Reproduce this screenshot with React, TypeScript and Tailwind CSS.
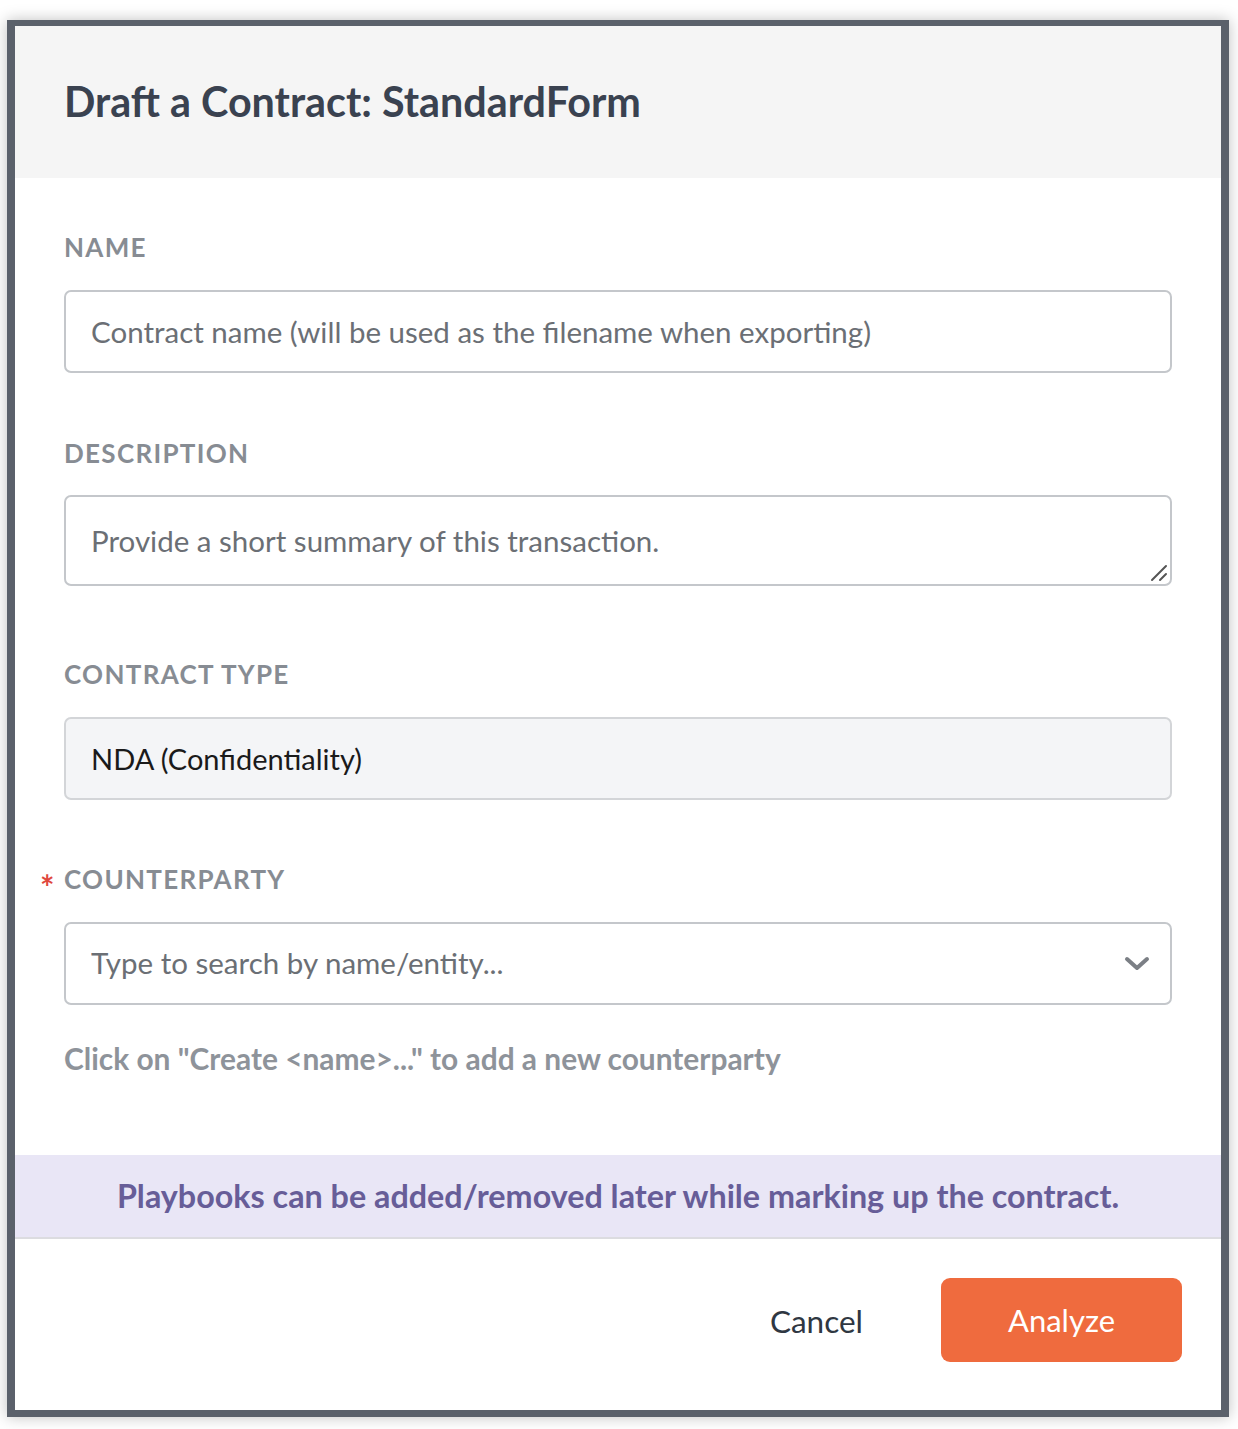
import React from "react";

const font = { fontFamily: '"Lato", "Noto Sans", sans-serif' };

function Label({ children, required }: { children: React.ReactNode; required?: boolean }) {
  return (
    <div className="relative flex h-[40px] items-center">
      {required && (
        <span className="absolute left-[-24px] top-[2px] text-[34px] font-bold text-[#e0483e]">*</span>
      )}
      <span className="text-[26px] font-bold uppercase tracking-[0.05em] text-[#878c93]">{children}</span>
    </div>
  );
}

export default function App() {
  return (
    <div className="min-h-screen bg-white pl-[7px] pt-[20px]" style={font}>
      <div className="w-[1222px] border-x-[8px] border-t-[6px] border-b-[7px] border-[#5b616b] bg-white shadow-[0_0_14px_rgba(0,0,0,0.25)]">
        {/* header */}
        <div className="flex h-[152px] items-center bg-[#f5f5f5] px-[49px]">
          <h1 className="text-[41.3px] font-bold text-[#3a4250]">Draft a Contract: StandardForm</h1>
        </div>

        {/* form */}
        <div className="px-[49px] pt-[49px]">
          <Label>Name</Label>
          <input
            className="mt-[23px] block h-[83px] w-full rounded-[7px] border-2 border-[#c4c7cb] px-[25px] text-[29.5px] text-[#333] outline-none placeholder:text-[#6b6f75]"
            placeholder="Contract name (will be used as the filename when exporting)"
          />

          <div className="mt-[60px]">
            <Label>Description</Label>
          </div>
          <div className="relative mt-[22px]">
            <textarea
              className="block h-[91px] w-full resize-none rounded-[7px] border-2 border-[#c4c7cb] px-[25px] pt-[26px] text-[29.5px] leading-[36px] text-[#333] outline-none placeholder:text-[#6b6f75]"
              placeholder="Provide a short summary of this transaction."
            />
            <svg className="absolute bottom-[4px] right-[4px]" width="18" height="18" viewBox="0 0 18 18">
              <path d="M2 16 L16 2 M10 16 L16 10" stroke="#555" strokeWidth="2" strokeLinecap="round" />
            </svg>
          </div>

          <div className="mt-[68px]">
            <Label>Contract Type</Label>
          </div>
          <div className="mt-[23px] flex h-[83px] items-center rounded-[7px] border-2 border-[#d3d5d8] bg-[#f4f5f7] px-[25px] text-[29px] text-[#1a1a1a]">
            NDA (Confidentiality)
          </div>

          <div className="mt-[59px]">
            <Label required>Counterparty</Label>
          </div>
          <div className="mt-[23px] flex h-[83px] items-center justify-between rounded-[7px] border-2 border-[#c4c7cb] pl-[25px] pr-[20px]">
            <input
              className="w-full text-[29.5px] text-[#333] outline-none placeholder:text-[#6b6f75]"
              placeholder="Type to search by name/entity..."
            />
            <svg width="26" height="16" viewBox="0 0 26 16" className="shrink-0">
              <path d="M3 3 L13 12 L23 3" fill="none" stroke="#7b7f85" strokeWidth="4" strokeLinecap="round" strokeLinejoin="round" />
            </svg>
          </div>

          <div className="mt-[33px] flex h-[40px] items-center text-[29.9px] font-bold text-[#8e939a]">
            Click on "Create &lt;name&gt;..." to add a new counterparty
          </div>
        </div>

        {/* banner */}
        <div className="mt-[77px] flex h-[84px] items-center justify-center border-b-2 border-[#dcdce0] bg-[#e9e6f6]">
          <span className="text-[32.3px] font-bold text-[#675d98]">
            Playbooks can be added/removed later while marking up the contract.
          </span>
        </div>

        {/* footer */}
        <div className="flex h-[171px] items-start justify-end pr-[39px] pt-[39px]">
          <button className="mr-[78px] mt-[20px] text-[31.5px] text-[#2f3742]">Cancel</button>
          <button className="h-[84px] w-[241px] rounded-[9px] bg-[#ef6b3e] text-[31px] text-white">Analyze</button>
        </div>
      </div>
    </div>
  );
}
